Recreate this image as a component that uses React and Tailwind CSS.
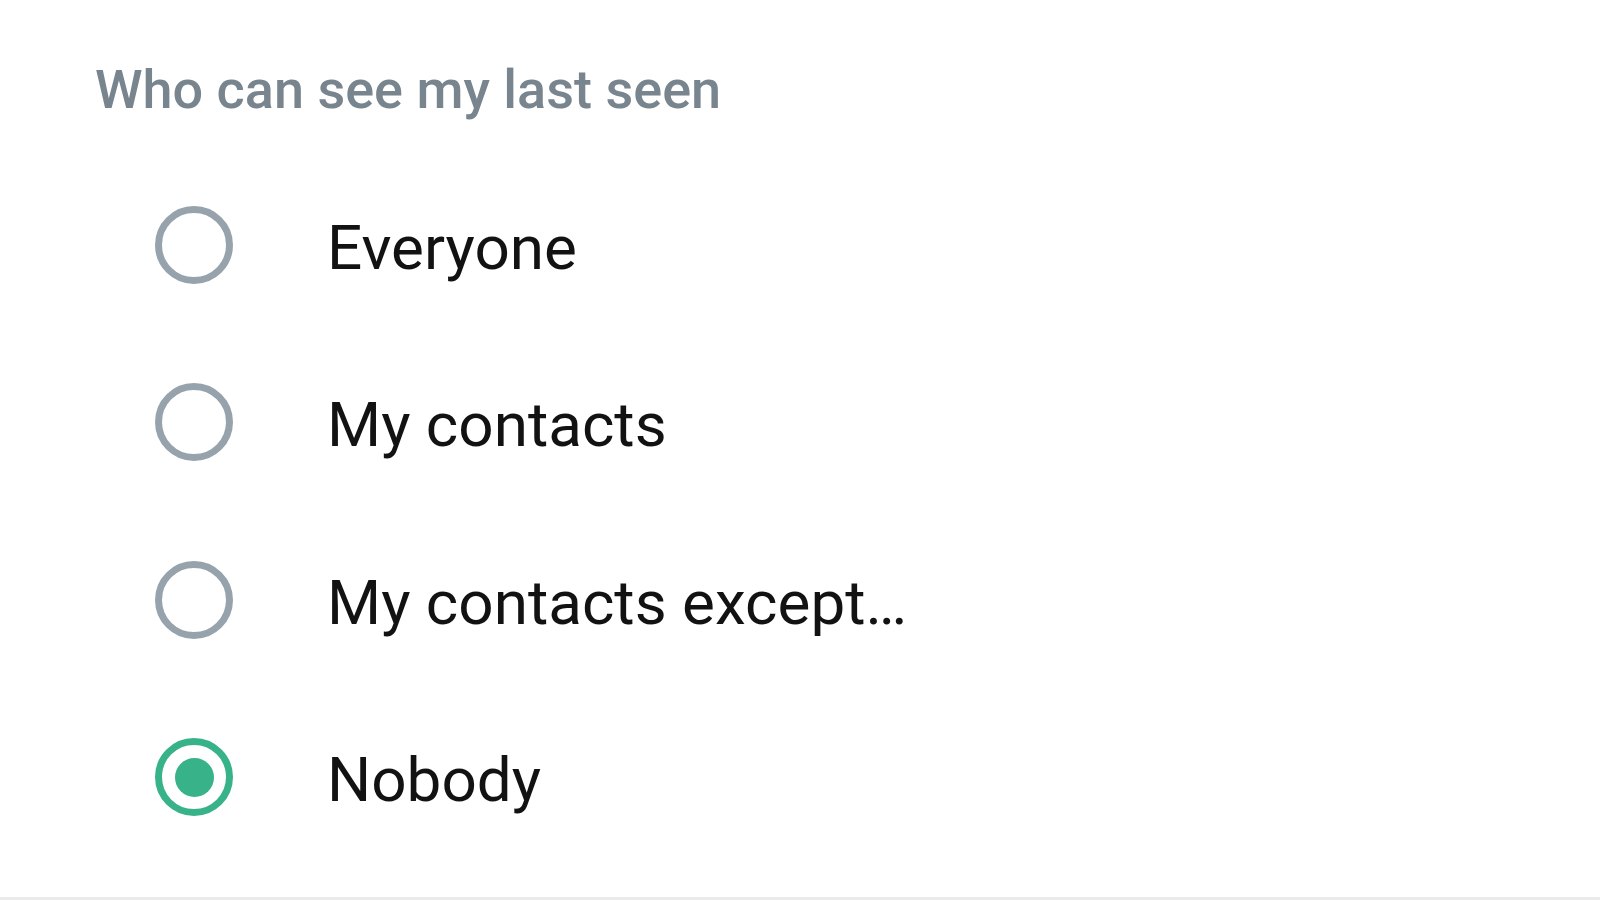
export default function App() {
  const options = [
    { label: "Everyone", checked: false },
    { label: "My contacts", checked: false },
    { label: "My contacts except…", checked: false },
    { label: "Nobody", checked: true },
  ];
  return (
    <div
      className="w-[1600px] h-[900px] bg-white border-b-[3px] border-[#ebebeb] box-border flex flex-col"
      style={{ fontFamily: "Roboto, 'Noto Sans', sans-serif" }}
    >
      <div className="pt-[63px] pl-[95px] text-[54px] leading-none font-medium text-[#78858f]">
        Who can see my last seen
      </div>
      <div className="flex flex-col pt-[39px]">
        {options.map((o) => (
          <div key={o.label} className="h-[177.5px] flex items-center pl-[155px] gap-[94px]">
            {o.checked ? (
              <div className="w-[78px] h-[78px] rounded-full border-[7px] border-[#38b289] flex items-center justify-center shrink-0">
                <div className="w-[39px] h-[39px] rounded-full bg-[#38b289]" />
              </div>
            ) : (
              <div className="w-[78px] h-[78px] rounded-full border-[7px] border-[#97a3ac] shrink-0" />
            )}
            <div className="mt-[6px] text-[62px] leading-none text-[#121212]">{o.label}</div>
          </div>
        ))}
      </div>
    </div>
  );
}
